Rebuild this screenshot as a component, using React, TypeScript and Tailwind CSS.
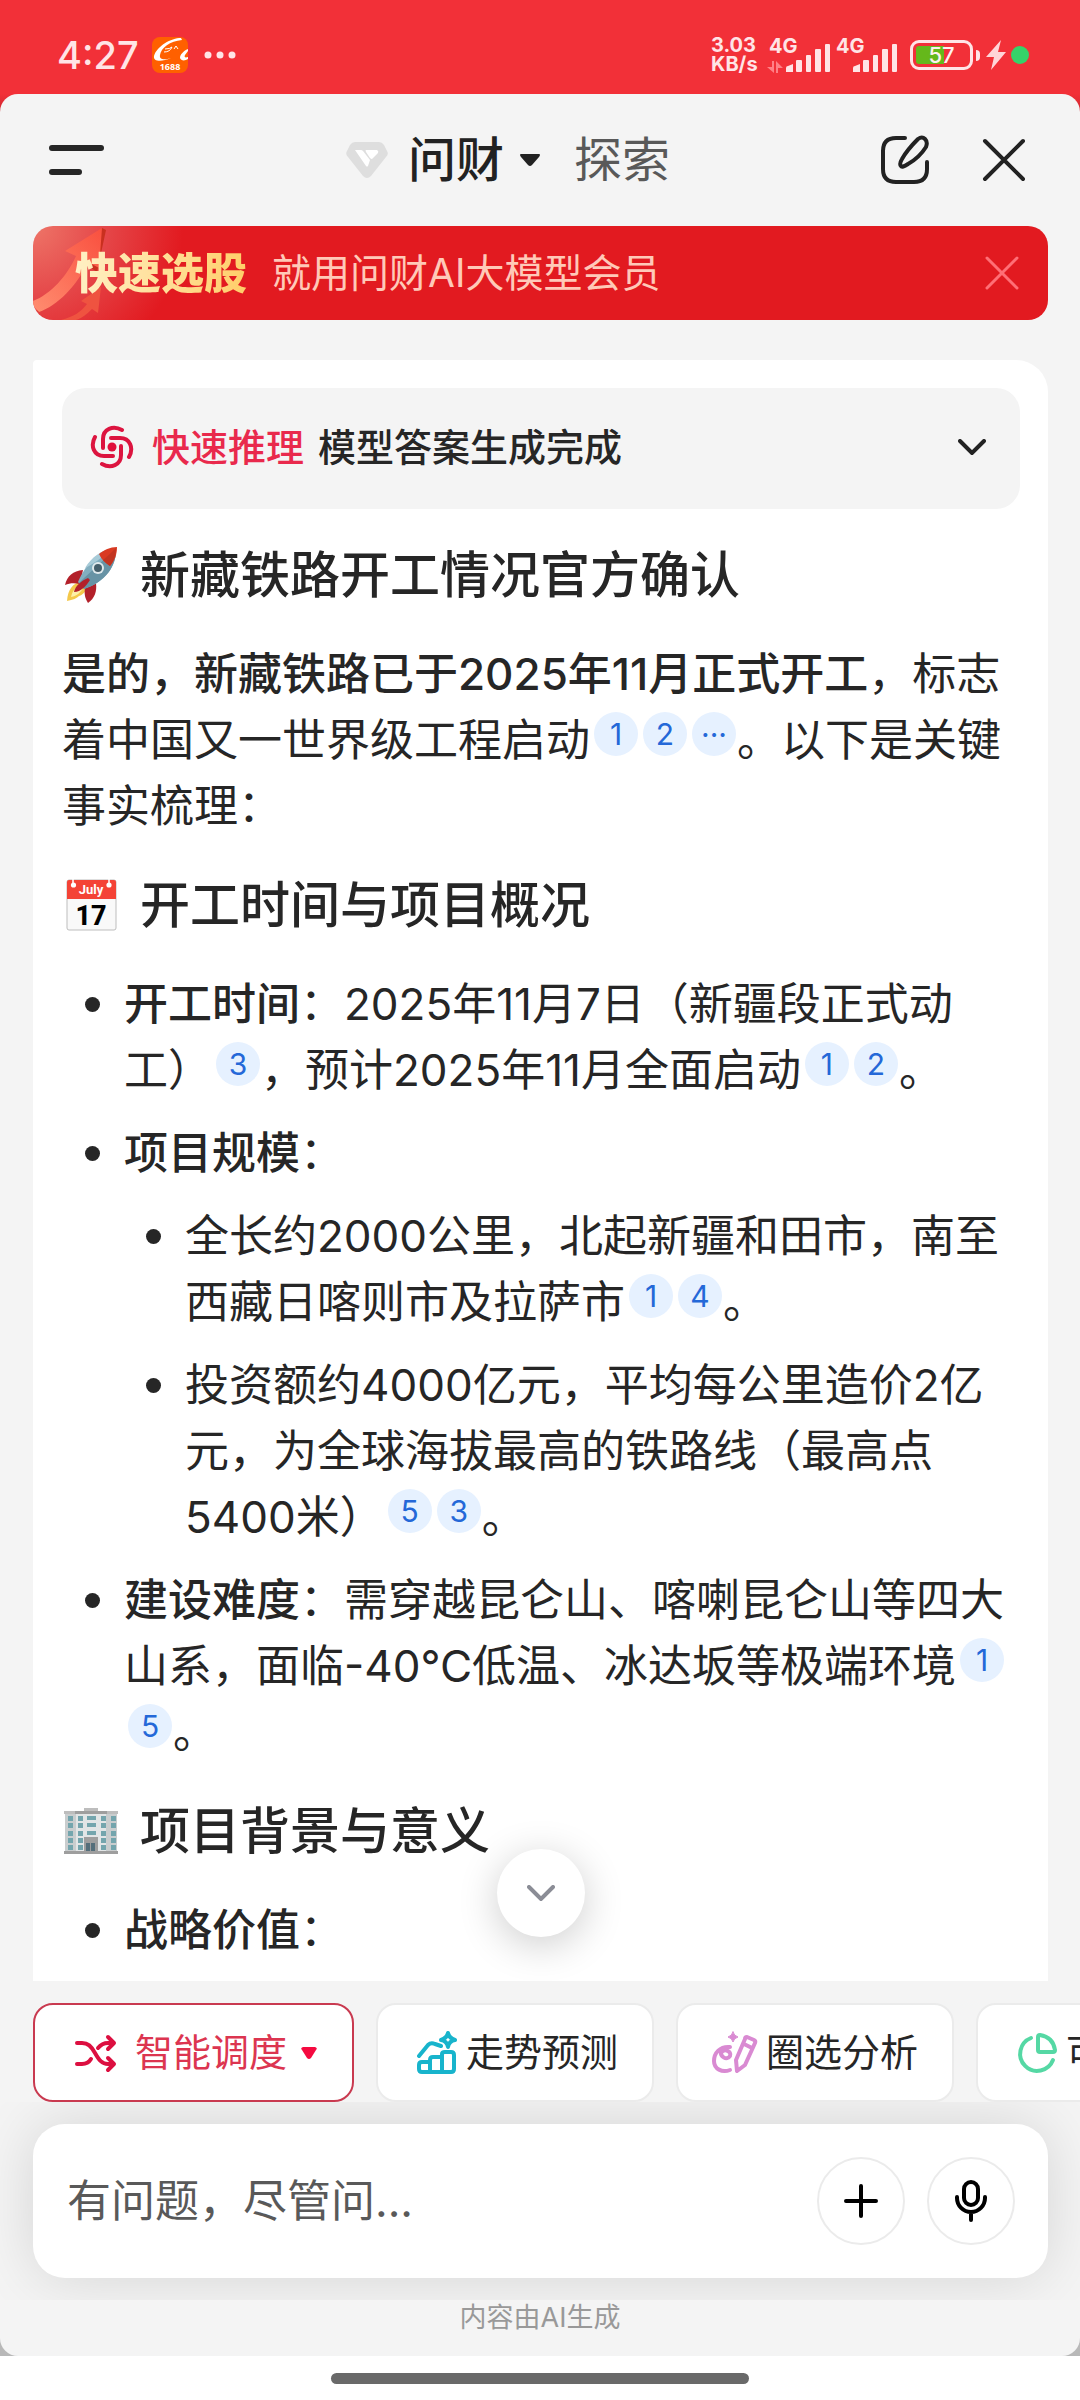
import { type ReactNode } from "react";

function Cite({ children }: { children: ReactNode }) {
  return (
    <button
      type="button"
      className="ml-1 mr-px inline-flex h-11 w-11 items-center justify-center rounded-full bg-[#e6f1ff] align-[11px] text-[30px] leading-[44px] text-[#2468d8]"
    >
      {children}
    </button>
  );
}

function Heading({ icon, children }: { icon: ReactNode; children: ReactNode }) {
  return (
    <h2 className="flex items-center gap-5 text-[50px] font-medium leading-[66px]">
      {icon}
      <span>{children}</span>
    </h2>
  );
}

function Item({ children }: { children: ReactNode }) {
  return (
    <li className="flex gap-6">
      <span aria-hidden="true" className="mt-[26px] h-[15px] w-[15px] shrink-0 rounded-full bg-[#262626]" />
      <div className="flex min-w-0 flex-1 flex-col gap-[17px]">{children}</div>
    </li>
  );
}

function Rocket() {
  return (
    <svg viewBox="0 0 58 58" className="h-[58px] w-[58px] shrink-0" aria-hidden="true">
      <path d="M19 36C11 37 6 43 5 55c6-1 10-3 12-5 4-1 7-5 8-8z" fill="#f4c84a" />
      <path d="M18 39c-5 2-8 7-9 12 6-1 10-5 12-9z" fill="#fdf0a8" />
      <path d="M21 24C11 25 5 30 3 39c5-2 9-2 15-1z" fill="#b3202a" />
      <path d="M34 37c1 8-1 15-8 20-3-5-4-9-3-15z" fill="#b3202a" />
      <path d="M54 2C40 3 26 13 16 36l6 7C43 36 55 20 54 2z" fill="#82aebf" />
      <path d="M54 2C42 14 27 27 17 37l5 6C43 36 55 20 54 2z" fill="#6793a5" />
      <path d="M52 2C39 4 30 11 23 22c7-3 16-10 29-20z" fill="#a8cbd8" />
      <path d="M55 1C48 1 42 4 37 8c2 5 6 9 11 12 5-6 7-12 7-19z" fill="#d93a22" />
      <path d="M54 2C49 7 45 11 41 14c2 2 4 4 7 6 4-5 6-11 6-18z" fill="#c23420" />
      <circle cx="36" cy="22" r="6" fill="#dfe9ec" />
      <circle cx="36" cy="22" r="4" fill="#455f6b" />
      <path d="M26 32c-7 3-13 8-14 14 7 0 12-6 16-12z" fill="#b3202a" />
    </svg>
  );
}

function Calendar() {
  return (
    <svg viewBox="0 0 58 58" className="h-[58px] w-[58px] shrink-0" aria-hidden="true">
      <rect x="5" y="4" width="49" height="50" rx="2" fill="#f9f9f9" stroke="#bdbdbd" />
      <path d="M5 6q0-2 2-2h45q2 0 2 2v17H5z" fill="#f44336" />
      <path d="M11 3v6M47 3v6" stroke="#fff" strokeWidth="1.5" />
      <circle cx="11.500" cy="9" r="2.600" fill="#fff" />
      <circle cx="47" cy="9" r="2.600" fill="#fff" />
      <text x="29" y="18" textAnchor="middle" fontSize="13" fontWeight="700" fill="#fff" fontFamily="Roboto, sans-serif">July</text>
      <text x="29" y="49" textAnchor="middle" fontSize="27" fontWeight="800" fill="#000" fontFamily="Roboto, sans-serif">17</text>
    </svg>
  );
}

function Building() {
  const rows = [14, 21, 29, 36, 43];
  const cols = [6, 16, 39, 49];
  return (
    <svg viewBox="0 0 58 58" className="h-[58px] w-[58px] shrink-0" aria-hidden="true">
      <rect x="22" y="6" width="14" height="4" fill="#bdbdbd" />
      <path d="M2 9h54v3H2z" fill="#bdbdbd" />
      <path d="M13 9h32v3H13z" fill="#9e9e9e" />
      <path d="M3 12h11v39H3zM44 12h11v39H44z" fill="#c9cdce" />
      <path d="M14 12h30v39H14z" fill="#e2e5e6" />
      {rows.map((y) => (
        <g key={y} fill="#74a5ad">
          {cols.map((x) => (
            <rect key={x} x={x} y={y} width="5" height="5" />
          ))}
          {y < 34 && <rect x="25" y={y} width="9" height="4" />}
        </g>
      ))}
      <rect x="22" y="35" width="14" height="15" fill="#9e9e9e" />
      <path d="M2 49h54v3H2z" fill="#9e9e9e" />
      <path d="M24 41h4v8h-4zM29 41h4v8h-4z" fill="#546e7a" />
    </svg>
  );
}

function Signal() {
  return (
    <svg viewBox="0 0 44 30" className="h-[30px] w-11" fill="#ffe4e6" aria-hidden="true">
      <path d="M0 29v-4q0-2 2-2l5-2v8z" />
      <rect x="10" y="17" width="6" height="12" rx="1" />
      <rect x="20" y="12" width="5" height="17" rx="1" />
      <rect x="29" y="6" width="6" height="23" rx="1" />
      <rect x="39" y="1" width="5" height="28" rx="1" />
    </svg>
  );
}

function StatusBar() {
  return (
    <div className="flex h-[94px] shrink-0 items-center justify-between pl-[57px] pr-[51px] pt-4 text-[#ffe4e6]">
      <div className="flex items-center">
        <span className="w-[95px] text-[38px] font-medium leading-[36px]">4:27</span>
        <svg viewBox="0 0 36 36" className="h-9 w-9" aria-hidden="true">
          <rect width="36" height="36" rx="8" fill="#ff6000" />
          <path d="M29 1C19 1 5 9 2 19c-1 6 8 6 17 2-6 2-12 2-11-3C9 11 18 4 30 3z" fill="#fff" />
          <path d="M13 12q5 0 7-2-2 5-8 5M22 12l2-3 2 3" fill="none" stroke="#fff" strokeWidth="1" />
          <path d="M36 12c-5 2-8 6-8 9 1 3 5 3 8 1v-2c-3 1-4 0-3-2l3-4z" fill="#fff" />
          <text x="18" y="33" textAnchor="middle" fontSize="9" fontWeight="700" fill="#fff" fontFamily="Open Sans, sans-serif">1688</text>
        </svg>
        <svg viewBox="0 0 32 8" className="ml-4 h-2 w-8" fill="#ffe4e6" aria-hidden="true">
          <circle cx="4" cy="4" r="3.500" />
          <circle cx="16" cy="4" r="3.500" />
          <circle cx="28" cy="4" r="3.500" />
        </svg>
      </div>
      <div className="flex items-center font-bold">
        <div className="w-[58px] text-[20px] leading-[19px]">
          <div>3.03</div>
          <div>KB/s</div>
        </div>
        <div className="relative flex h-9 w-[61px] items-end justify-end">
          <span className="absolute left-0 top-0 text-[20px] leading-[18px]">4G</span>
          <svg viewBox="0 0 16 12" className="absolute bottom-0 left-[-2px] h-3 w-4" fill="#ff8086" aria-hidden="true">
            <path d="M5 0h2v12L0 6h5zM9 12h2V7h5L9 0z" />
          </svg>
          <Signal />
        </div>
        <div className="relative ml-[6px] flex h-9 w-[61px] items-end justify-end">
          <span className="absolute left-0 top-0 text-[20px] leading-[18px]">4G</span>
          <Signal />
        </div>
        <div className="ml-[13px] flex items-center gap-[3px] font-medium">
          <div className="flex h-[30px] w-[63px] items-center justify-center rounded-[9px] border-[3px] border-[#ffe4e6] bg-[linear-gradient(90deg,#65b81b_28px,transparent_28px)] bg-origin-content bg-clip-content p-[3px] text-[22px] leading-[22px] text-[#fff0f0]">
            57
          </div>
          <span className="h-[11px] w-1 rounded-r-sm bg-[#ffe4e6]" />
        </div>
        <svg viewBox="0 0 20 30" className="ml-[6px] h-[30px] w-5" fill="#ffd5d8" aria-hidden="true">
          <path d="M15 0L0 17h8L5 30 20 12h-8z" />
        </svg>
        <span className="ml-[5px] h-[18px] w-[18px] rounded-full bg-[#36d269]" />
      </div>
    </div>
  );
}

function Header() {
  return (
    <header className="flex h-[132px] shrink-0 items-center justify-between px-[49px] text-[48px] leading-[56px]">
      <div className="flex w-24">
        <button type="button" aria-label="菜单" className="flex h-[30px] flex-col justify-between">
          <span className="h-[6px] w-[55px] rounded-full bg-[#262626]" />
          <span className="h-[6px] w-[33px] rounded-full bg-[#262626]" />
        </button>
      </div>
      <nav className="flex items-center">
        <svg viewBox="0 0 42 36" className="h-9 w-[42px]" aria-hidden="true">
          <path d="M9 0h24q3 0 5 3l3 6q2 3-1 6L25 34q-4 4-8 0L2 15q-3-3-1-6l3-6q2-3 5-3z" fill="#dedede" />
          <path d="M9 8h6q1 0 2 1l7 9-2 6q-1 1-2 0zM20 8h11q2 1 1 3l-6 6q-1 0-2-1l-4-6q-1-2 0-2z" fill="#fff" />
        </svg>
        <button type="button" className="ml-5 flex items-center gap-4 font-medium text-[#222]">
          问财
          <svg viewBox="0 0 20 12" className="h-3 w-5" fill="#222" aria-hidden="true">
            <path d="M1 0h18q2 0 0 3l-7 8q-2 2-4 0L1 3Q-1 0 1 0z" />
          </svg>
        </button>
        <button type="button" className="ml-[34px] text-[#595959]">探索</button>
      </nav>
      <div className="flex w-40 items-center justify-end gap-[52px] pr-[5px]">
        <button type="button" aria-label="新建对话">
          <svg viewBox="0 0 50 50" className="h-[50px] w-[50px]" fill="none" stroke="#222" strokeWidth="4" strokeLinecap="round" aria-hidden="true">
            <path d="M25 3H16Q3 3 3 16v18q0 13 13 13h18q13 0 13-13v-7" />
            <path d="M38 4q4-3 7 0t1 8Q39 23 28 29q-6 4-7 2-2-2 1-7Q27 15 38 4z" />
          </svg>
        </button>
        <button type="button" aria-label="关闭">
          <svg viewBox="0 0 44 44" className="h-11 w-11" stroke="#222" strokeWidth="4" strokeLinecap="round" aria-hidden="true">
            <path d="M3 3l38 38M41 3L3 41" />
          </svg>
        </button>
      </div>
    </header>
  );
}

function Banner() {
  return (
    <div className="relative ml-[33px] mr-8 flex h-[94px] shrink-0 items-center overflow-hidden rounded-[20px] bg-[#e21a20] bg-[radial-gradient(circle_at_0_0,#ee7568_0,#e5484a_70px,#e21a20_150px)] pl-[42px] pr-[29px]">
      <svg viewBox="0 0 150 94" className="absolute left-0 top-0 h-[94px] w-[150px]" aria-hidden="true">
        <defs>
          <linearGradient id="shaft" x1="0" y1="1" x2="1" y2="0">
            <stop offset="0" stopColor="#ff8d70" />
            <stop offset="1" stopColor="#f9503f" />
          </linearGradient>
        </defs>
        <path d="M5 86C22 78 40 62 52 38l12 8 9-42-4-2-20 30C38 54 20 72 2 78z" fill="#c9301f" />
        <path d="M0 75C18 68 34 50 43 30l-11-5L69 2l-3 40-11-6C44 60 24 80 6 86L0 80z" fill="url(#shaft)" />
        <path d="M28 94c12-3 20-8 26-16l-6-3 20-14-3 26-6-4c-6 6-10 9-16 11z" fill="#ef5340" />
      </svg>
      <strong className="relative bg-linear-to-r from-[#fff0c4] to-[#ffce68] bg-clip-text text-[43px] font-black leading-[56px] text-transparent">
        快速选股
      </strong>
      <span className="ml-[25px] flex-1 text-[39px] leading-[56px] text-[#ffc9b8]">就用问财AI大模型会员</span>
      <button type="button" aria-label="关闭横幅">
        <svg viewBox="0 0 34 34" className="h-[34px] w-[34px]" stroke="#ff6f76" strokeWidth="3" strokeLinecap="round" aria-hidden="true">
          <path d="M2 2l30 30M32 2L2 32" />
        </svg>
      </button>
    </div>
  );
}

function Answer() {
  return (
    <article className="flex flex-col gap-[33px] pl-[29px] pr-7 pt-7 text-[44px] leading-[66px] text-[#262626] [text-spacing-trim:space-all]">
      <button type="button" className="flex h-[121px] items-center rounded-3xl bg-[#f4f4f4] pb-1 pl-7 pr-[34px] text-[38px] font-medium">
        <svg viewBox="0 0 44 44" className="h-11 w-11" fill="none" stroke="#dc143f" strokeWidth="4" strokeLinecap="round" aria-hidden="true">
          <circle cx="22" cy="22" r="4.500" fill="#e0103c" stroke="none" />
          <path d="M32 5C23 0 13 4 13 14v9" />
          <path d="M39 32C44 23 40 13 30 13h-9" />
          <path d="M12 39C21 44 31 40 31 30v-9" />
          <path d="M5 12C0 21 4 31 14 31h9" />
        </svg>
        <span className="ml-[18px] text-[#e9294c]">快速推理</span>
        <span className="ml-[14px]">模型答案生成完成</span>
        <svg viewBox="0 0 28 16" className="ml-auto h-4 w-7" fill="none" stroke="#222" strokeWidth="4" strokeLinecap="round" aria-hidden="true">
          <path d="M2 2l12 12L26 2" />
        </svg>
      </button>

      <Heading icon={<Rocket />}>新藏铁路开工情况官方确认</Heading>
      <p>
        <strong className="font-medium">是的，新藏铁路已于2025年11月正式开工</strong>，标志着中国又一世界级工程启动
        <Cite>1</Cite><Cite>2</Cite><Cite>···</Cite>。以下是关键事实梳理：
      </p>

      <Heading icon={<Calendar />}>开工时间与项目概况</Heading>
      <ul className="flex flex-col gap-[17px] pl-[23px]">
        <Item>
          <p>
            <strong className="font-medium">开工时间</strong>：2025年11月7日（新疆段正式动<span className="whitespace-nowrap">工）</span><Cite>3</Cite>，预计2025年11月全面启动<Cite>1</Cite><Cite>2</Cite>。
          </p>
        </Item>
        <Item>
          <p><strong className="font-medium">项目规模</strong>：</p>
          <ul className="flex flex-col gap-[17px] pl-[22px]">
            <Item>
              <p>全长约2000公里，北起新疆和田市，南至西藏日喀则市及拉萨市<Cite>1</Cite><Cite>4</Cite>。</p>
            </Item>
            <Item>
              <p>投资额约4000亿元，平均每公里造价2亿元，为全球海拔最高的铁路线（最高点5400米）<Cite>5</Cite><Cite>3</Cite>。</p>
            </Item>
          </ul>
        </Item>
        <Item>
          <p>
            <strong className="font-medium">建设难度</strong>：需穿越昆仑山、喀喇昆仑山等四大山系，面临-40℃低温、冰达坂等极端环境<Cite>1</Cite><Cite>5</Cite>。
          </p>
        </Item>
      </ul>

      <Heading icon={<Building />}>项目背景与意义</Heading>
      <ul className="flex flex-col gap-[17px] pl-[23px]">
        <Item>
          <p><strong className="font-medium">战略价值</strong>：</p>
        </Item>
      </ul>
    </article>
  );
}

const pill =
  "flex h-[99px] shrink-0 items-center gap-2 rounded-[20px] border-2 border-[#ebebeb] bg-white pl-[38px] pr-[34px] text-[38px] text-[#262626]";

function Tools() {
  return (
    <div className="flex shrink-0 gap-[22px] overflow-hidden pl-[33px] pt-[22px]">
      <button type="button" className="flex h-[99px] shrink-0 items-center rounded-[20px] border-2 border-[#c93a50] bg-white pl-[38px] pr-[35px] text-[38px] text-[#dc3550]">
        <svg viewBox="0 0 44 40" className="h-10 w-11" fill="none" stroke="#dc0f40" strokeWidth="4" strokeLinecap="round" strokeLinejoin="round" aria-hidden="true">
          <path d="M4 10h5c6 0 9 3 13 10s7 11 13 11h5M35 25l6 6-6 6M4 31h5q6 0 9-5M25 15q4-5 10-5h5M35 4l6 6-6 6" />
        </svg>
        <span className="ml-[18px]">智能调度</span>
        <svg viewBox="0 0 16 12" className="ml-[14px] h-3 w-4" fill="#f50a40" aria-hidden="true">
          <path d="M2 0h12q3 1 1 3l-5 8q-2 2-4 0L1 3Q-1 1 2 0z" />
        </svg>
      </button>
      <button type="button" className={pill}>
        <svg viewBox="0 0 42 44" className="h-11 w-[42px]" fill="none" stroke="#18b4cc" strokeWidth="4" strokeLinecap="round" strokeLinejoin="round" aria-hidden="true">
          <path d="M3 25L12 14q3-3 7-1l6 2M32 2q1 5 7 7-6 1-7 7-1-6-7-7 6-2 7-7z" />
          <path d="M3 34q0-3 3-3h8v-2q0-3 3-3h9v-3q0-2 3-2h6q3 0 3 3v14q0 3-3 3H6q-3 0-3-3zM14 31v9M26 26v14" />
        </svg>
        走势预测
      </button>
      <button type="button" className={pill}>
        <svg viewBox="4 0 42 44" className="h-11 w-[42px] overflow-visible" fill="none" stroke="#d98ad2" strokeWidth="4" strokeLinecap="round" strokeLinejoin="round" aria-hidden="true">
          <path d="M18 16C8 15 2 22 2 30c0 8 8 12 16 9M9 20c-1 6 6 10 9 5 2-5-6-8-9-3" />
          <path d="M35 6l7 3q2 1 1 3L33 34l-8 6-1-11L33 8q0-2 2-2zM32 13l8 4" />
          <path d="M21 1q1 4 5 5-4 1-5 5-1-4-5-5 4-1 5-5z" fill="#d98ad2" strokeWidth="1" />
        </svg>
        圈选分析
      </button>
      <button type="button" className={pill}>
        <svg viewBox="0 0 42 44" className="h-11 w-[42px]" fill="none" stroke="#55d8a4" strokeWidth="4" strokeLinecap="round" strokeLinejoin="round" aria-hidden="true">
          <path d="M15 7a17 17 0 1 0 22 22" />
          <path d="M22 6q0-2 2-2 13 2 15 15 0 2-2 2H24q-2 0-2-2z" />
        </svg>
        可视化
      </button>
    </div>
  );
}

function Composer() {
  return (
    <div className="shrink-0 overflow-hidden py-[22px] pl-[33px] pr-8">
      <form
        onSubmit={(e) => e.preventDefault()}
        className="flex h-[154px] items-center gap-[22px] rounded-[32px] bg-white pl-[34px] pr-[33px] shadow-[0_0_60px_rgba(0,0,0,0.13)]"
      >
        <input
          type="text"
          aria-label="提问"
          placeholder="有问题，尽管问..."
          className="min-w-0 flex-1 text-[44px] leading-[66px] text-[#262626] outline-none placeholder:text-[#595959]"
        />
        <button type="button" aria-label="添加" className="flex h-[88px] w-[88px] shrink-0 items-center justify-center rounded-full border-2 border-[#ebebeb]">
          <svg viewBox="0 0 34 34" className="h-[34px] w-[34px]" stroke="#000" strokeWidth="4" strokeLinecap="round" aria-hidden="true">
            <path d="M17 2v30M2 17h30" />
          </svg>
        </button>
        <button type="button" aria-label="语音输入" className="flex h-[88px] w-[88px] shrink-0 items-center justify-center rounded-full border-2 border-[#ebebeb]">
          <svg viewBox="0 0 32 42" className="h-[42px] w-8" fill="none" stroke="#000" strokeWidth="4" strokeLinecap="round" aria-hidden="true">
            <rect x="9" y="2" width="14" height="23" rx="7" />
            <path d="M2 17v1a14 14 0 0 0 28 0v-1M16 32v8" />
          </svg>
        </button>
      </form>
    </div>
  );
}

export default function App() {
  return (
    <div className="flex h-dvh flex-col bg-white font-['Inter','Noto_Sans_CJK_SC',sans-serif]">
      <div className="flex min-h-0 flex-1 flex-col bg-[linear-gradient(#f23038_0,#f23038_94px,#c8252d_114px,#b8b8b8_200px)]">
        <StatusBar />
        <main className="flex min-h-0 flex-1 flex-col overflow-hidden rounded-[18px] bg-[#f4f4f4]">
          <Header />
          <Banner />
          <section className="relative ml-[33px] mr-8 mt-10 min-h-0 flex-1 rounded-tl rounded-tr-[32px] bg-white">
            <div className="h-full overflow-hidden">
              <Answer />
            </div>
            <button
              type="button"
              aria-label="回到底部"
              className="absolute bottom-11 left-1/2 flex h-[88px] w-[88px] -translate-x-1/2 items-center justify-center rounded-full bg-white shadow-[0_8px_40px_rgba(0,0,0,0.2)]"
            >
              <svg viewBox="0 0 28 16" className="h-4 w-7" fill="none" stroke="#8b8d96" strokeWidth="4" strokeLinecap="round" aria-hidden="true">
                <path d="M2 2l12 12L26 2" />
              </svg>
            </button>
          </section>
          <Tools />
          <Composer />
          <p className="h-14 shrink-0 text-center text-[27px] leading-9 text-[#999]">内容由AI生成</p>
        </main>
      </div>
      <div className="flex h-11 shrink-0 justify-center pt-[17px]">
        <div className="h-[11px] w-[418px] rounded-full bg-[#696969]" />
      </div>
    </div>
  );
}
